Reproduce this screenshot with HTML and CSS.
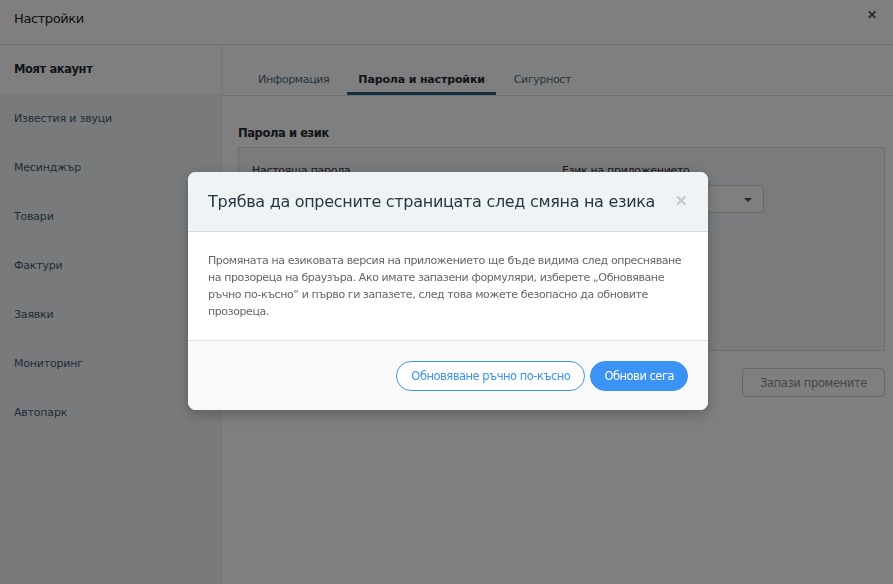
FILE: index.html
```html
<!DOCTYPE html>
<html lang="bg">
  <head>
    <meta charset="UTF-8" />
    <meta name="viewport" content="width=device-width, initial-scale=1.0" />
    <title>Настройки</title>
    <link rel="stylesheet" href="styles.css">
  </head>
  <body>
    <div class="app">
      <header class="topbar">
        <span class="topbar-title">Настройки</span>
        <button class="topbar-close">&#x2715;</button>
      </header>

      <div class="layout">
        <aside class="sidebar">
          <div class="side-active">Моят акаунт</div>
          <nav class="side-list">
            <a class="side-item">Известия и звуци</a>
            <a class="side-item">Месинджър</a>
            <a class="side-item">Товари</a>
            <a class="side-item">Фактури</a>
            <a class="side-item">Заявки</a>
            <a class="side-item">Мониторинг</a>
            <a class="side-item">Автопарк</a>
          </nav>
        </aside>

        <main class="content">
          <div class="tabs">
            <a class="tab">Информация</a>
            <a class="tab tab-active">Парола и настройки</a>
            <a class="tab">Сигурност</a>
          </div>

          <section class="panel">
            <h2 class="panel-title">Парола и език</h2>
            <div class="box">
              <div class="field">
                <label>Настояща парола</label>
                <input class="input" type="password" />
              </div>
              <div class="field">
                <label>Език на приложението</label>
                <div class="select">Български<span class="caret"></span></div>
              </div>
            </div>
            <div class="actions">
              <button class="btn-save">Запази промените</button>
            </div>
          </section>
        </main>
      </div>
    </div>

    <div class="overlay">
      <div class="modal">
        <div class="modal-head">
          <h3 class="modal-title">Трябва да опресните страницата след смяна на езика</h3>
          <button class="modal-close">&#x2715;</button>
        </div>
        <div class="modal-body">
          Промяната на езиковата версия на приложението ще бъде видима след опресняване
          на прозореца на браузъра. Ако имате запазени формуляри, изберете „Обновяване
          ръчно по-късно“ и първо ги запазете, след това можете безопасно да обновите
          прозореца.
        </div>
        <div class="modal-foot">
          <button class="btn btn-outline">Обновяване ръчно по-късно</button>
          <button class="btn btn-primary">Обнови сега</button>
        </div>
      </div>
    </div>
  </body>
</html>
```

FILE: styles.css
```css
body {
  margin: 0;
  font-family: "DejaVu Sans", Verdana, sans-serif;
  font-size: 11px;
  letter-spacing: -0.3px;
  color: #333;
  background-color: #fff;
}

.app {
  height: 100vh;
  display: flex;
  flex-direction: column;
}

.topbar {
  height: 44px;
  border-bottom: 1px solid #dbe4ec;
  display: flex;
  align-items: center;
  justify-content: space-between;
  padding: 0 14px;
  flex-shrink: 0;
}

.topbar-title {
  font-size: 13px;
  letter-spacing: -0.4px;
  color: #222;
  margin-top: -8px;
}

.topbar-close {
  border: none;
  background: none;
  color: #4a5560;
  font-size: 12px;
  font-weight: bold;
  padding: 0 2px;
  margin-top: -14px;
  cursor: pointer;
}

.layout {
  flex: 1;
  display: flex;
}

.sidebar {
  width: 221px;
  flex-shrink: 0;
  display: flex;
  flex-direction: column;
}

.side-active {
  height: 49px;
  line-height: 49px;
  padding: 0 14px;
  font-weight: bold;
  font-size: 11.5px;
  letter-spacing: -0.4px;
  color: #1e2a33;
  background-color: #fff;
}

.side-list {
  flex: 1;
  background-color: #f2f4f6;
}

.side-item {
  display: block;
  height: 49px;
  line-height: 49px;
  padding: 0 14px;
  color: #3f5d75;
  letter-spacing: -0.2px;
}

.content {
  flex: 1;
  border-left: 1px solid #eceff2;
}

.tabs {
  height: 50px;
  border-bottom: 1px solid #dde3e8;
  display: flex;
  align-items: flex-end;
  gap: 7px;
  padding-left: 25px;
}

.tab {
  padding: 9px 11px 4px;
  line-height: 16px;
  border-bottom: 3px solid transparent;
  color: #4b6a82;
  letter-spacing: -0.35px;
}

.tab-active {
  color: #1e2a33;
  font-weight: bold;
  letter-spacing: -0.15px;
  border-bottom-color: #2c5f80;
}

.panel {
  padding: 0 8px 0 16px;
}

.panel-title {
  margin: 0;
  padding: 29px 0 6px;
  font-size: 11.5px;
  letter-spacing: -0.4px;
  line-height: 16px;
  color: #1e2a33;
}

.box {
  height: 204px;
  border: 1px solid #d9dde1;
  background-color: #f4f6f8;
  display: flex;
  padding: 16px 12px;
  gap: 107px;
  box-sizing: border-box;
}

.field {
  display: flex;
  flex-direction: column;
  gap: 8px;
  width: 203px;
}

.field label {
  padding-left: 1px;
  color: #333;
}

.input,
.select {
  height: 28px;
  box-sizing: border-box;
  border: 1px solid #cfd5da;
  border-radius: 3px;
  background-color: #fff;
}

.select {
  position: relative;
  padding: 0 10px;
  line-height: 26px;
  color: #333;
}

.caret {
  position: absolute;
  right: 11px;
  top: 12px;
  border-left: 4px solid transparent;
  border-right: 4px solid transparent;
  border-top: 4px solid #555;
}

.actions {
  display: flex;
  justify-content: flex-end;
  padding-top: 17px;
}

.btn-save {
  width: 143px;
  height: 29px;
  border: 1px solid #c8cdd2;
  border-radius: 4px;
  background-color: #fff;
  color: #8a8f94;
  font-family: inherit;
  font-size: 11.5px;
  letter-spacing: -0.35px;
}

/* modal */
.overlay {
  position: fixed;
  inset: 0;
  background-color: rgba(0, 0, 0, 0.5);
  display: flex;
  align-items: center;
  justify-content: center;
}

.modal {
  width: 520px;
  margin-left: 3px;
  margin-top: -3px;
  background-color: #fff;
  border-radius: 8px;
  overflow: hidden;
  box-shadow: 0 4px 14px rgba(0, 0, 0, 0.25);
}

.modal-head {
  height: 60px;
  background-color: #eef3f6;
  border-bottom: 1px solid #d3dde5;
  display: flex;
  align-items: center;
  justify-content: space-between;
  padding: 0 20px;
  box-sizing: border-box;
}

.modal-title {
  margin: 0;
  font-size: 16px;
  letter-spacing: -0.3px;
  font-weight: normal;
  white-space: nowrap;
  color: #2a3640;
}

.modal-close {
  border: none;
  background: none;
  color: #c4c8cc;
  font-size: 15px;
  font-weight: bold;
  padding: 0;
  cursor: pointer;
}

.modal-body {
  padding: 20px;
  line-height: 17px;
  font-size: 11px;
  letter-spacing: -0.4px;
  color: #666;
  border-bottom: 1px solid #e2e4e6;
}

.modal-foot {
  height: 69px;
  box-sizing: border-box;
  background-color: #f9f9f9;
  display: flex;
  justify-content: flex-end;
  align-items: flex-start;
  gap: 5px;
  padding: 20px 20px 0;
}

.btn {
  height: 30px;
  border-radius: 15px;
  padding: 0 14px;
  font-family: inherit;
  font-size: 11.5px;
  letter-spacing: -0.5px;
  cursor: pointer;
}

.btn-outline {
  border: 1px solid #3a93f5;
  background-color: #fff;
  color: #3a93f5;
}

.btn-primary {
  padding: 0 13px;
  border: 1px solid #3a93f5;
  background-color: #3a93f5;
  color: #fff;
}
```
